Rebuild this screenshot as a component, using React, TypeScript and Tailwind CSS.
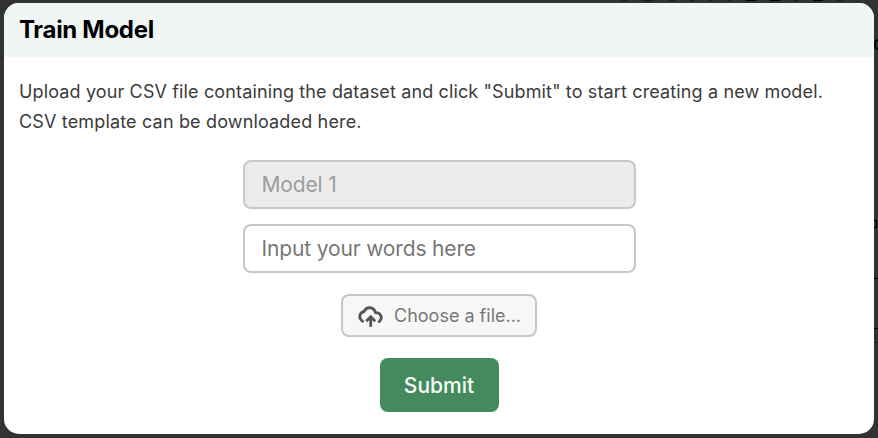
import React from "react";

function UploadIcon() {
  return (
    <svg className="h-[24px] w-[26px] shrink-0" viewBox="0 0 26 24" fill="none" stroke="#555555" strokeWidth="2.8">
      <path d="M4.6 17.3C0.2 14.3 1.3 8.3 6 7.6C8.3 2.2 15.8 2.4 17.5 8.7C22.8 8.5 25.3 14 21.2 17.6" strokeLinecap="round" />
      <path d="M12.7 22.8V13M8.2 17.2L12.7 12.7L17.2 17.2" />
    </svg>
  );
}

export default function App() {
  return (
    <div className="grid h-[438px] w-[878px] grid-cols-[870px_4px] grid-rows-[3px_431px] overflow-hidden bg-[#323232] pl-1 font-['Inter',sans-serif]">
      <div aria-hidden="true" className="col-span-2 flex items-start gap-[14px] pl-[618px]">
        <span className="h-px w-[6px] bg-[#1c1c1c]" />
        <span className="h-px w-[12px] bg-[#1c1c1c]" />
        <span className="h-px w-[7px] bg-[#1c1c1c]" />
        <span className="h-px w-[5px] bg-[#1c1c1c]" />
        <span className="h-px w-[5px] bg-[#1c1c1c]" />
        <span className="h-px w-[5px] bg-[#1c1c1c]" />
        <span className="h-px w-[10px] bg-black" />
        <span className="h-px w-[10px] bg-black" />
        <span className="h-px w-[5px] bg-[#1c1c1c]" />
        <span className="h-px w-[10px] bg-black" />
        <span className="h-px w-[5px] bg-[#1c1c1c]" />
      </div>

      <section className="flex flex-col overflow-hidden rounded-[15px] bg-white">
        <header className="flex h-[54px] shrink-0 items-center bg-[#eff6f4] px-[15px]">
          <h1 className="text-[24px] font-bold tracking-[-0.3px] text-black">Train Model</h1>
        </header>
        <div className="flex flex-col gap-[23px] pt-5">
          <p className="px-[15px] text-[18px] leading-[30px] whitespace-nowrap text-[#3b3b3b]">
            <span className="block tracking-[0.135px]">Upload your CSV file containing the dataset and click "Submit" to start creating a new model.</span>
            <span className="block tracking-[0.16px]">CSV template can be downloaded here.</span>
          </p>
          <form className="flex flex-col items-center gap-[21px]" onSubmit={(e) => e.preventDefault()}>
            <div className="flex flex-col gap-[15px] text-[21px] tracking-[-0.15px]">
              <div className="flex h-[49px] w-[393px] items-center rounded-lg border-2 border-[#c7c7c7] bg-[#ececec] px-[17px] text-[#9c9c9c]">
                Model 1
              </div>
              <div className="flex h-[49px] w-[393px] items-center rounded-lg border-2 border-[#c7c7c7] bg-white px-[17px] text-[#777777]">
                Input your words here
              </div>
            </div>
            <button type="button" className="flex h-[43px] w-[196px] items-center gap-[10px] rounded-lg border-2 border-[#c7c7c7] bg-[#f7f7f7] pl-[15px] text-[18px] text-[#777777]">
              <UploadIcon />
              <span className="pb-px whitespace-nowrap">Choose a file...</span>
            </button>
            <button type="submit" className="flex h-[54px] w-[119px] items-center justify-center rounded-lg bg-[#458a5e] pt-0.5 text-[21px] font-medium text-[#f5faf7]">
              Submit
            </button>
          </form>
        </div>
      </section>

      <div aria-hidden="true" className="flex flex-col items-start">
        <span className="mt-[36px] h-[11px] w-[9px] rounded-full border-2 border-black" />
        <span className="mt-[170px] h-[8px] w-[3px] border-y border-r border-black" />
        <span className="mt-[50px] h-px w-1 bg-black" />
        <span className="mt-[49px] h-px w-1 bg-black" />
        <span className="mt-[13px] h-px w-1 bg-[#111a30]" />
      </div>
    </div>
  );
}
